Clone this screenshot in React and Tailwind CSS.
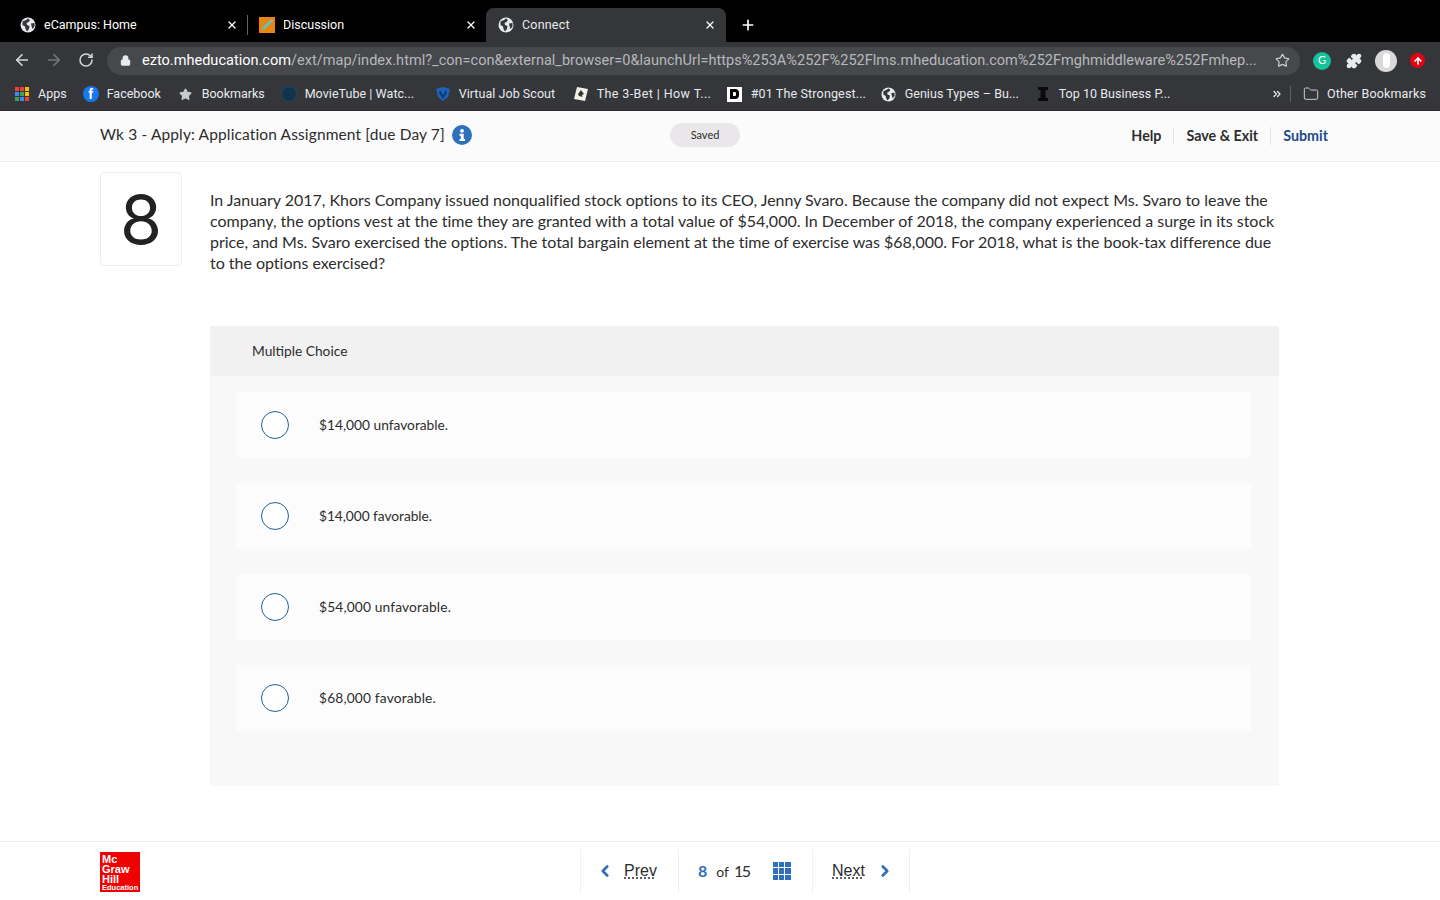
import React from 'react';
import { ArrowLeft, ArrowRight, RotateCw, Lock, Star, Puzzle, X, Plus, Folder, ChevronLeft, ChevronRight, ChevronsRight, ArrowUp } from 'lucide-react';

const Globe = ({ className = '' }) => (
  <svg viewBox="0 0 16 16" className={className}>
    <circle cx="8" cy="8" r="7.5" fill="#e8eaed" />
    <path d="M2.5 4.5 L6 3 L8 1.5 L10 3 L8.5 5 L6.5 6 L7 8 L9.5 9 L9 12 L7 14.5 L5.5 12 L5 9.5 L2.5 8 Z M11 6.5 L14.5 6 L14.5 9.5 L12.5 12 L11.5 9 Z" fill="#35363a" />
  </svg>
);

const Tab = ({ icon, title, active, width }) => (
  <div className={`flex items-center h-[34px] ${width} pl-[12px] pr-[8px] text-[12.5px] rounded-t-[8px] ${active ? 'bg-[#35363a] text-[#e8eaed] tracking-[0.2px]' : 'text-white'}`}>
    <span className="w-[16px] h-[16px] shrink-0 mr-[8px]">{icon}</span>
    <span className="flex-1 truncate">{title}</span>
    <X className={`w-[12px] h-[12px] ${active ? 'mr-[2px]' : 'mr-[1px]'}`} strokeWidth={2.5} color="#fff" />
  </div>
);

const Bookmark = ({ icon, title, textClass = '' }) => (
  <div className="flex items-center shrink-0 mr-[16px]">
    <span className="w-[16px] h-[16px] mr-[8px] flex items-center justify-center">{icon}</span>
    <span className={`whitespace-nowrap ${textClass}`}>{title}</span>
  </div>
);

const choices = [
  { text: '$14,000 unfavorable.', track: '' },
  { text: '$14,000 favorable.', track: 'tracking-[-0.05px]' },
  { text: '$54,000 unfavorable.', track: 'tracking-[0.15px]' },
  { text: '$68,000 favorable.', track: 'tracking-[0.17px]' },
];

export default function App() {
  return (
    <div className="w-[1440px] h-[900px] overflow-hidden bg-white flex flex-col font-['Lato',sans-serif] text-[#2d2d2d]">
      {/* browser chrome */}
      <div className="h-[42px] bg-black flex items-end pl-[8px] font-['Roboto',sans-serif]">
        <Tab width="w-[239px]" title="eCampus: Home" icon={<Globe className="w-[16px] h-[16px]" />} />
        <div className="w-px h-[20px] bg-[#5f6368] mb-[7px]" />
        <Tab
          width="w-[238px]"
          title={<span className="-ml-[1px]">Discussion</span>}
          icon={
            <svg viewBox="0 0 16 16" className="w-[16px] h-[16px] -ml-[1px]">
              <rect width="16" height="16" fill="#e8850c" />
              <path d="M3 13 L4 10 L11 3 L13 5 L6 12 Z" fill="#5bc4c9" />
              <path d="M11 3 L13 5 L14 3 L13 2 Z" fill="#e88fb0" />
            </svg>
          }
        />
        <Tab active width="w-[240px]" title="Connect" icon={<Globe className="w-[16px] h-[16px]" />} />
        <Plus className="w-[16px] h-[16px] ml-[14px] mb-[9px]" color="#fff" strokeWidth={2.5} />
      </div>

      <div className="h-[38px] bg-[#35363a] flex items-center pl-[13px] pr-[14px]">
        <ArrowLeft className="w-[18px] h-[18px] -mt-[2px]" color="#d5d7da" strokeWidth={2.25} />
        <ArrowRight className="w-[18px] h-[18px] ml-[14px] -mt-[2px]" color="#75777a" strokeWidth={2.25} />
        <RotateCw className="w-[16px] h-[16px] ml-[15px] -mt-[2px]" color="#d5d7da" strokeWidth={2.25} />
        <div className="ml-[13px] w-[1193px] h-[28px] -mt-[1px] rounded-full bg-[#47484c] flex items-center pl-[13px] pr-[10px] font-['Roboto',sans-serif] text-[14.55px]">
          <Lock className="w-[11px] h-[11px] mr-[11px] shrink-0" color="#e8eaed" fill="#e8eaed" strokeWidth={2.5} />
          <span className="flex-1 whitespace-nowrap overflow-hidden text-[#b6b8bb]"><span className="text-white">ezto.mheducation.com</span>/ext/map/index.html?_con=con&external_browser=0&launchUrl=https%253A%252F%252Flms.mheducation.com%252Fmghmiddleware%252Fmhep...</span>
          <Star className="w-[15px] h-[15px] ml-[16px] shrink-0" color="#c8cacd" strokeWidth={2} />
        </div>
        <span className="ml-[13px] w-[18px] h-[18px] -mt-[1px] rounded-full bg-[#15c39a] text-white text-[11px] flex items-center justify-center">G</span>
        <Puzzle className="w-[16px] h-[16px] ml-[15px] -mt-[1px]" color="#e8eaed" fill="#e8eaed" />
        <span className="ml-[13px] w-[22px] h-[22px] -mt-[1px] rounded-full bg-[#d9d9d9] flex items-center justify-center">
          <span className="w-[7px] h-[15px] rounded-full bg-white" />
        </span>
        <span className="ml-[13px] w-[15px] h-[15px] -mt-[1px] rounded-full bg-[#e60012] flex items-center justify-center">
          <ArrowUp className="w-[10px] h-[10px]" color="#fff" strokeWidth={4} />
        </span>
      </div>

      <div className="h-[31px] bg-[#35363a] flex items-center pl-[14px] pr-[14px] pb-[2px] text-[12.5px] text-[#e8eaed] font-['Roboto',sans-serif] border-b border-[#2a2a2c]">
        <Bookmark
          title="Apps"
          icon={
            <span className="grid grid-cols-3 gap-[1px] w-[14px] h-[14px]">
              <i className="bg-[#ea4335]" /><i className="bg-[#ea4335]" /><i className="bg-[#fbbc05]" />
              <i className="bg-[#4285f4]" /><i className="bg-[#34a853]" /><i className="bg-[#fbbc05]" />
              <i className="bg-[#34a853]" /><i className="bg-[#4285f4]" /><i className="bg-[#ea4335]" />
            </span>
          }
        />
        <Bookmark
          title="Facebook"
          textClass="w-[55px]"
          icon={
            <span className="w-[16px] h-[16px] rounded-full bg-[#1877f2] flex items-end justify-center overflow-hidden text-white font-bold text-[14px] leading-[15px] font-['Liberation_Sans',sans-serif]">f</span>
          }
        />
        <Bookmark title="Bookmarks" textClass="w-[63px]" icon={<Star className="w-[13px] h-[13px]" color="#c8cacd" fill="#c8cacd" />} />
        <Bookmark
          title="MovieTube | Watc..."
          textClass="w-[114px] tracking-[0.05px]"
          icon={<span className="w-[16px] h-[16px] rounded-full bg-[#12344a] border border-[#1d4a66]" />}
        />
        <Bookmark
          title="Virtual Job Scout"
          textClass="w-[98px] tracking-[0.05px]"
          icon={
            <svg viewBox="0 0 16 16" className="w-[16px] h-[16px]">
              <path d="M1 3 L8 1 L15 3 L13 11 L8 15 L3 11 Z" fill="#1f62b8" />
              <path d="M5 4 L8 9 L11 4 L12 7 L8 13 L4 7 Z" fill="#0d3a75" />
            </svg>
          }
        />
        <Bookmark
          title="The 3-Bet | How T..."
          textClass="w-[114px] tracking-[0.4px]"
          icon={
            <svg viewBox="0 0 16 16" className="w-[16px] h-[16px]">
              <path d="M4 1 L15 3 L12 15 L1 13 Z" fill="#f4f1ea" />
              <path d="M8 4 L11 8 L9 9 L9.5 11 L6 10 L5 8 Z" fill="#33363a" />
            </svg>
          }
        />
        <Bookmark
          title="#01 The Strongest..."
          textClass="w-[114px] tracking-[0.15px]"
          icon={
            <span className="w-[15px] h-[15px] bg-white flex items-center justify-center">
              <span className="w-[9px] h-[10px] border-[3px] border-black rounded-r-[4px]" />
            </span>
          }
        />
        <Bookmark title="Genius Types – Bu..." textClass="w-[114px] tracking-[0.05px]" icon={<Globe className="w-[15px] h-[15px]" />} />
        <Bookmark
          title="Top 10 Business P..."
          textClass="tracking-[0.05px]"
          icon={
            <svg viewBox="0 0 16 16" className="w-[16px] h-[16px]">
              <path d="M3 1 H13 V4 H10.5 V12 H13 V15 H3 V12 H5.5 V4 H3 Z" fill="#0a0a0a" />
            </svg>
          }
        />
        <div className="flex-1" />
        <ChevronsRight className="w-[12px] h-[12px]" color="#e8eaed" strokeWidth={2.5} />
        <div className="w-px h-[16px] bg-[#5f6368] ml-[7px] mr-[12px]" />
        <Folder className="w-[16px] h-[16px] mr-[8px]" color="#c8cacd" strokeWidth={1.5} />
        <span className="tracking-[0.15px]">Other Bookmarks</span>
      </div>

      {/* assignment header */}
      <header className="h-[51px] bg-[#fbfbfb] border-b border-[#eeeeee] pl-[100px] pr-[112px] pb-[2px] flex items-center">
        <div className="w-[570px] flex items-center text-[15.5px] tracking-[0.13px]">
          <span>Wk 3 - Apply: Application Assignment [due Day 7]</span>
          <span className="ml-[7px] w-[20px] h-[20px] rounded-full bg-[#2f70bd] flex items-center justify-center">
            <svg viewBox="0 0 20 20" className="w-[20px] h-[20px]">
              <circle cx="10" cy="5.8" r="1.9" fill="#fff" />
              <path d="M7.5 8.8 H11.7 V14 H13 V16 H7.5 V14 H8.8 V10.8 H7.5 Z" fill="#fff" />
            </svg>
          </span>
        </div>
        <span className="w-[70px] h-[24px] rounded-full bg-[#e9e7e9] text-[11px] flex items-center justify-center">Saved</span>
        <div className="flex-1" />
        <div className="flex items-center text-[14.3px] font-bold mt-[2px]">
          <span className="pr-[12px] border-r border-[#e5e5e5] leading-[18px]">Help</span>
          <span className="px-[12px] border-r border-[#e5e5e5] leading-[18px]">Save &amp; Exit</span>
          <span className="pl-[12px] text-[#1c4a8c] leading-[18px]">Submit</span>
        </div>
      </header>

      {/* question */}
      <main className="flex-1 pl-[100px] pt-[10px] flex items-start">
        <div className="w-[82px] h-[94px] shrink-0 border border-[#eeeeee] rounded-[4px] flex items-center justify-center text-[68px] leading-none text-[#222] font-['Inter',sans-serif]">8</div>
        <div className="ml-[28px] w-[1069px] shrink-0">
          <p className="pt-[17px] text-[16px] leading-[21px] tracking-[-0.015px] whitespace-nowrap">
            In January 2017, Khors Company issued nonqualified stock options to its CEO, Jenny Svaro. Because the company did not expect Ms. Svaro to leave the<br />
            company, the options vest at the time they are granted with a total value of $54,000. In December of 2018, the company experienced a surge in its stock<br />
            price, and Ms. Svaro exercised the options. The total bargain element at the time of exercise was $68,000. For 2018, what is the book-tax difference due<br />
            to the options exercised?
          </p>
          <section className="mt-[53px] h-[460px] bg-[#f8f8f8] rounded-[2px]">
            <div className="h-[50px] bg-[#f1f1f1] pl-[42px] flex items-center text-[13.75px]">Multiple Choice</div>
            <div className="pt-[16px] pl-[26px] pr-[28px] flex flex-col gap-[25px]">
              {choices.map((c) => (
                <div key={c.text} className="h-[66px] bg-[#fcfcfc] rounded-[2px] pl-[25px] flex items-center text-[13.75px]">
                  <span className="w-[28px] h-[28px] rounded-full bg-white border-[1.5px] border-[#1f5f99] mr-[30px]" />
                  <span className={c.track}>{c.text}</span>
                </div>
              ))}
            </div>
          </section>
        </div>
      </main>

      {/* footer nav */}
      <footer className="h-[59px] border-t border-[#f0f0f0] pl-[100px] flex items-start">
        <div className="mt-[10px] w-[40px] h-[40px] bg-[#f00000] text-white font-bold font-['Liberation_Sans',sans-serif] text-[11px] leading-[10px] pl-[2px] pt-[2px] overflow-hidden whitespace-nowrap">
          Mc<br />Graw<br />Hill<br /><span className="block text-[7.5px] leading-[8px]">Education</span>
        </div>
        <nav className="ml-[440px] mt-[7px] h-[44px] flex border-x border-[#f0f0f0] font-['Liberation_Sans',sans-serif]">
          <div className="w-[97px] flex items-center pl-[15px] text-[16px]">
            <ChevronLeft className="w-[18px] h-[18px] mr-[10px]" color="#2f70bd" strokeWidth={3.5} />
            <span className="underline decoration-dotted underline-offset-2">Prev</span>
          </div>
          <div className="w-[135px] border-x border-[#f0f0f0] flex items-center pl-[19px] text-[16px] font-['Lato',sans-serif]">
            <span className="font-bold text-[#2f70bd]">8</span>
            <span className="ml-[9px] text-[14px]">of</span>
            <span className="ml-[5px] tracking-[-1.5px]">15</span>
            <span className="ml-[23px] grid grid-cols-3 gap-[1px] w-[18px] h-[18px]">
              {Array.from({ length: 9 }).map((_, i) => <i key={i} className="bg-[#2f70bd]" />)}
            </span>
          </div>
          <div className="w-[96px] flex items-center pl-[19px] text-[16px]">
            <span className="underline decoration-dotted underline-offset-2">Next</span>
            <ChevronRight className="w-[18px] h-[18px] ml-[11px]" color="#2f70bd" strokeWidth={3.5} />
          </div>
        </nav>
      </footer>
    </div>
  );
}
